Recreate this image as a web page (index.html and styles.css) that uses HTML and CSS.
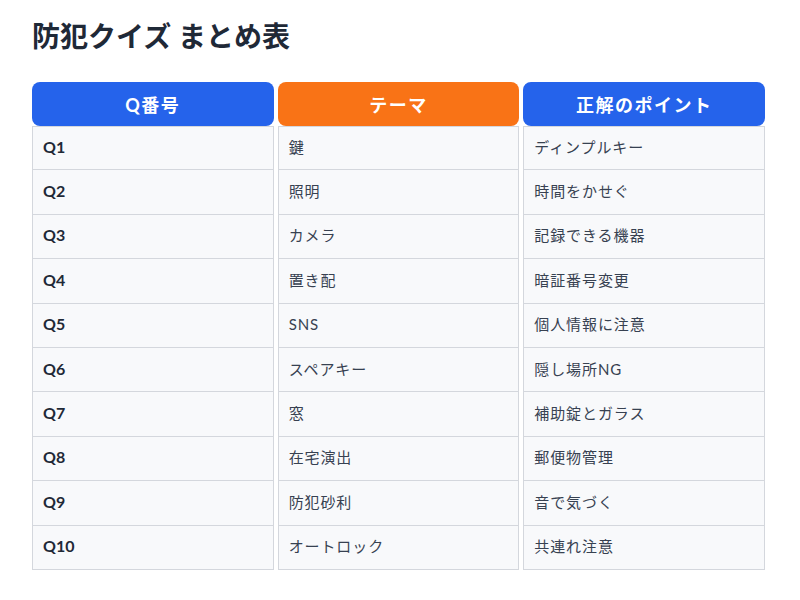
FILE: index.html
```html
<!DOCTYPE html>
<html lang="ja">
<head>
<meta charset="utf-8">
<link rel="stylesheet" href="styles.css">
</head>
<body>
<div class="page">
  <h1 class="title">防犯クイズ まとめ表</h1>
  <table class="quiz">
    <thead>
      <tr>
        <th class="h-blue">Q番号</th>
        <th class="h-orange">テーマ</th>
        <th class="h-blue">正解のポイント</th>
      </tr>
    </thead>
    <tbody>
      <tr><td class="q">Q1</td><td>鍵</td><td>ディンプルキー</td></tr>
      <tr><td class="q">Q2</td><td>照明</td><td>時間をかせぐ</td></tr>
      <tr><td class="q">Q3</td><td>カメラ</td><td>記録できる機器</td></tr>
      <tr><td class="q">Q4</td><td>置き配</td><td>暗証番号変更</td></tr>
      <tr><td class="q">Q5</td><td>SNS</td><td>個人情報に注意</td></tr>
      <tr><td class="q">Q6</td><td>スペアキー</td><td>隠し場所NG</td></tr>
      <tr><td class="q">Q7</td><td>窓</td><td>補助錠とガラス</td></tr>
      <tr><td class="q">Q8</td><td>在宅演出</td><td>郵便物管理</td></tr>
      <tr><td class="q">Q9</td><td>防犯砂利</td><td>音で気づく</td></tr>
      <tr><td class="q">Q10</td><td>オートロック</td><td>共連れ注意</td></tr>
    </tbody>
  </table>
</div>
</body>
</html>
```
FILE: styles.css
```css
html, body {
  margin: 0;
  padding: 0;
  background: #ffffff;
}
body {
  font-family: "Lato", "Noto Sans CJK JP", sans-serif;
  color: #1f2937;
}
.page {
  padding: 19px 32px 0 32px;
}
.title {
  margin: 0 0 29px 0;
  font-size: 28px;
  line-height: 34px;
  font-weight: 700;
  color: #1f2937;
}
.quiz {
  width: 741px;
  margin-left: -4px;
  border-collapse: separate;
  border-spacing: 4px 0;
  table-layout: fixed;
}
.quiz th {
  height: 44px;
  padding: 0;
  border-radius: 8px;
  color: #ffffff;
  font-size: 18px;
  font-weight: 700;
  text-align: center;
  vertical-align: middle;
  letter-spacing: 1.5px;
}
.h-blue { background: #2563eb; }
.h-orange { background: #f97316; }
.quiz td {
  height: 44.4px;
  box-sizing: border-box;
  padding: 0 10px 2px 10px;
  background: #f8f9fb;
  border-left: 1px solid #d4d7dd;
  border-right: 1px solid #d4d7dd;
  border-bottom: 1px solid #d4d7dd;
  font-size: 15px;
  line-height: 22px;
  color: #374151;
  letter-spacing: 0.9px;
  vertical-align: middle;
  text-align: left;
}
.quiz tbody tr:first-child td {
  border-top: 1px solid #d4d7dd;
}
.quiz td.q {
  font-weight: 700;
  font-size: 16px;
  color: #1f2937;
  letter-spacing: 0;
}
```
